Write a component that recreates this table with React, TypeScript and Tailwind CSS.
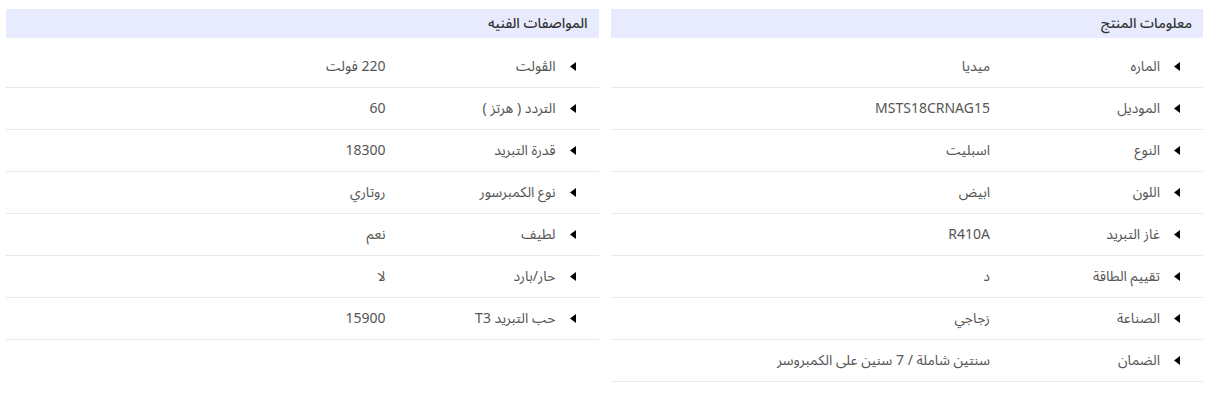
const productInfo: [string, string][] = [
  ['الماره', 'ميديا'],
  ['الموديل', 'MSTS18CRNAG15'],
  ['النوع', 'اسبليت'],
  ['اللون', 'ابيض'],
  ['غاز التبريد', 'R410A'],
  ['تقييم الطاقة', 'د'],
  ['الصناعة', 'زجاجي'],
  ['الضمان', 'سنتين شاملة / 7 سنين على الكمبروسر'],
];

const techSpecs: [string, string][] = [
  ['الڤولت', '220 فولت'],
  ['التردد ( هرتز )', '60'],
  ['قدرة التبريد', '18300'],
  ['نوع الكمبرسور', 'روتاري'],
  ['لطيف', 'نعم'],
  ['حار/بارد', 'لا'],
  ['حب التبريد T3', '15900'],
];

function Caret() {
  return (
    <svg width="6" height="9" viewBox="0 0 6 9" className="shrink-0">
      <path d="M6 0 L0 4.5 L6 9 Z" fill="#000" />
    </svg>
  );
}

function SpecTable({ title, rows }: { title: string; rows: [string, string][] }) {
  return (
    <div className="flex-1 min-w-0">
      <div className="h-[29px] bg-[#e7ebfd] flex items-center px-[11px] text-[14px] text-[#333] font-medium">
        {title}
      </div>
      <div className="mt-2">
        {rows.map(([label, value]) => (
          <div key={label} className="h-[42px] flex items-center border-b border-[#e9e9e9]">
            <div className="w-[213px] shrink-0 flex items-center gap-[14px] pr-[23px]">
              <Caret />
              <span>{label}</span>
            </div>
            <div className="flex-1">{value}</div>
          </div>
        ))}
      </div>
    </div>
  );
}

export default function App() {
  return (
    <div
      dir="rtl"
      className="w-[1211px] h-[393px] bg-white flex gap-3 pt-[9px] pl-[6px] pr-[8px] text-[14px] text-[#555]"
      style={{ fontFamily: '"Noto Sans Arabic", "Noto Sans", "DejaVu Sans", sans-serif' }}
    >
      <SpecTable title="معلومات المنتج" rows={productInfo} />
      <SpecTable title="المواصفات الفنيه" rows={techSpecs} />
    </div>
  );
}
